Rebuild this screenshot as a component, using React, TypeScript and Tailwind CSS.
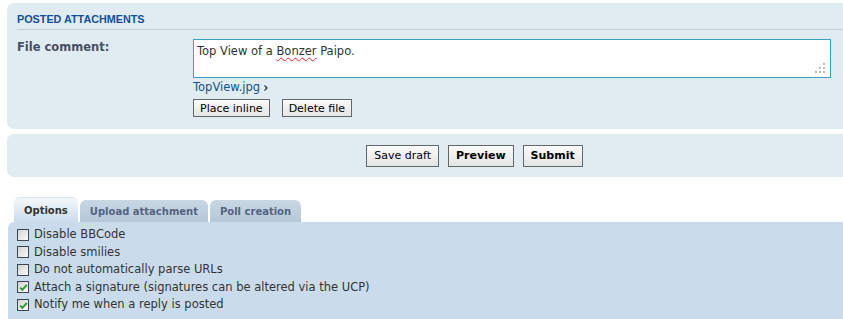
import React from "react";

const V = { fontFamily: '"DejaVu Sans", Verdana, sans-serif' };
const A = { fontFamily: '"Liberation Sans", Arial, sans-serif' };

function Check({ checked }: { checked?: boolean }) {
  return (
    <span className="relative inline-block w-[12px] h-[12px] shrink-0 border border-[#3a4654] bg-gradient-to-br from-[#d3d3d3] to-[#fbfbfb]">
      {checked && (
        <svg className="absolute left-[1px] top-[1px]" width="9" height="9" viewBox="0 0 9 9">
          <path d="M1.2 4.6 L3.4 6.8 L7.8 1.8" stroke="#2e9c2e" strokeWidth="2" fill="none" />
        </svg>
      )}
    </span>
  );
}

function Btn({ children, bold, tall }: { children: React.ReactNode; bold?: boolean; tall?: boolean }) {
  return (
    <span
      className={
        "inline-flex items-center justify-center border border-[#666] bg-gradient-to-b from-[#fbfbfb] to-[#e4e4e4] text-[11px] text-black leading-none " +
        (tall ? "h-[22px] px-[7px] " : "h-[18px] px-[6px] ") +
        (bold ? "font-bold" : "")
      }
      style={V}
    >
      {children}
    </span>
  );
}

export default function App() {
  const opts: [string, boolean][] = [
    ["Disable BBCode", false],
    ["Disable smilies", false],
    ["Do not automatically parse URLs", false],
    ["Attach a signature (signatures can be altered via the UCP)", true],
    ["Notify me when a reply is posted", true],
  ];
  return (
    <div className="w-[843px] h-[319px] overflow-hidden bg-white text-[11.5px] text-[#333]" style={V}>
      <div className="pt-[3px] pl-[7px]">
        {/* Posted attachments panel */}
        <div className="w-[940px] h-[126px] rounded-[7px] bg-[#e1ebf2] px-[10px]">
          <h3
            className="pt-[10px] pb-[3px] leading-[13px] text-[10.8px] font-bold uppercase text-[#115098] border-b border-[#cccccc]"
            style={A}
          >
            Posted attachments
          </h3>
          <div className="flex mt-[9px]">
            <div className="w-[176px] shrink-0 pt-[2px] leading-[13px] font-bold text-[#425067]">File comment:</div>
            <div className="flex flex-col">
              <div className="relative w-[638px] h-[39px] border border-[#3aa0c8] bg-white pl-[3px] pt-[5px] leading-[13px] text-[#333]">
                Top View of a{" "}
                <span className="underline decoration-wavy decoration-[#e02020] decoration-[1px] underline-offset-[2px]">Bonzer</span>{" "}
                Paipo.
                <svg className="absolute right-[5px] bottom-[4px]" width="10" height="10" viewBox="0 0 10 10">
                  <rect x="8" y="0" width="2" height="2" fill="#b8b8b8" />
                  <rect x="4" y="4" width="2" height="2" fill="#b8b8b8" />
                  <rect x="8" y="4" width="2" height="2" fill="#b8b8b8" />
                  <rect x="0" y="8" width="2" height="2" fill="#b8b8b8" />
                  <rect x="4" y="8" width="2" height="2" fill="#b8b8b8" />
                  <rect x="8" y="8" width="2" height="2" fill="#b8b8b8" />
                </svg>
              </div>
              <div className="mt-[3px] leading-[13px] flex items-center text-[#105289]">
                <span>TopView.jpg</span>
                <svg className="ml-[4px]" width="4" height="6" viewBox="0 0 4 6">
                  <path d="M0.5 0.5 L3 3 L0.5 5.5" stroke="#333" strokeWidth="1.3" fill="none" />
                </svg>
              </div>
              <div className="mt-[5px] flex gap-[12px]">
                <Btn>Place inline</Btn>
                <Btn>Delete file</Btn>
              </div>
            </div>
          </div>
        </div>

        {/* Submit buttons panel */}
        <div className="mt-[5px] w-[935px] h-[43px] rounded-[7px] bg-[#e1ebf2] flex items-center justify-center gap-[9px]">
          <Btn tall>Save draft</Btn>
          <Btn tall bold>Preview</Btn>
          <Btn tall bold>Submit</Btn>
        </div>

        {/* Tabs */}
        <div className="mt-[20px] pl-[7px] flex items-end gap-[2px] h-[25px] text-[10px]">
          <div className="h-[25px] px-[10px] flex items-center rounded-t-[6px] bg-gradient-to-b from-[#f5f8fb] to-[#cadceb] font-bold text-[#333] border-t border-[#d6e2ec]">
            Options
          </div>
          <div className="h-[22px] px-[10px] flex items-center rounded-t-[6px] bg-gradient-to-b from-[#c9d7e4] to-[#b5c8d9] font-bold text-[#536482]">
            Upload attachment
          </div>
          <div className="h-[22px] px-[10px] flex items-center rounded-t-[6px] bg-gradient-to-b from-[#c9d7e4] to-[#b5c8d9] font-bold text-[#536482]">
            Poll creation
          </div>
        </div>

        {/* Options panel */}
        <div className="ml-[1px] w-[940px] h-[120px] rounded-tl-[6px] bg-[#cadceb] pt-[4px] pl-[9px]">
          {opts.map(([label, c]) => (
            <div key={label} className="h-[17.5px] flex items-center gap-[5px] text-[#333]">
              <Check checked={c} />
              <span className="leading-[13px]">{label}</span>
            </div>
          ))}
        </div>
      </div>
    </div>
  );
}
